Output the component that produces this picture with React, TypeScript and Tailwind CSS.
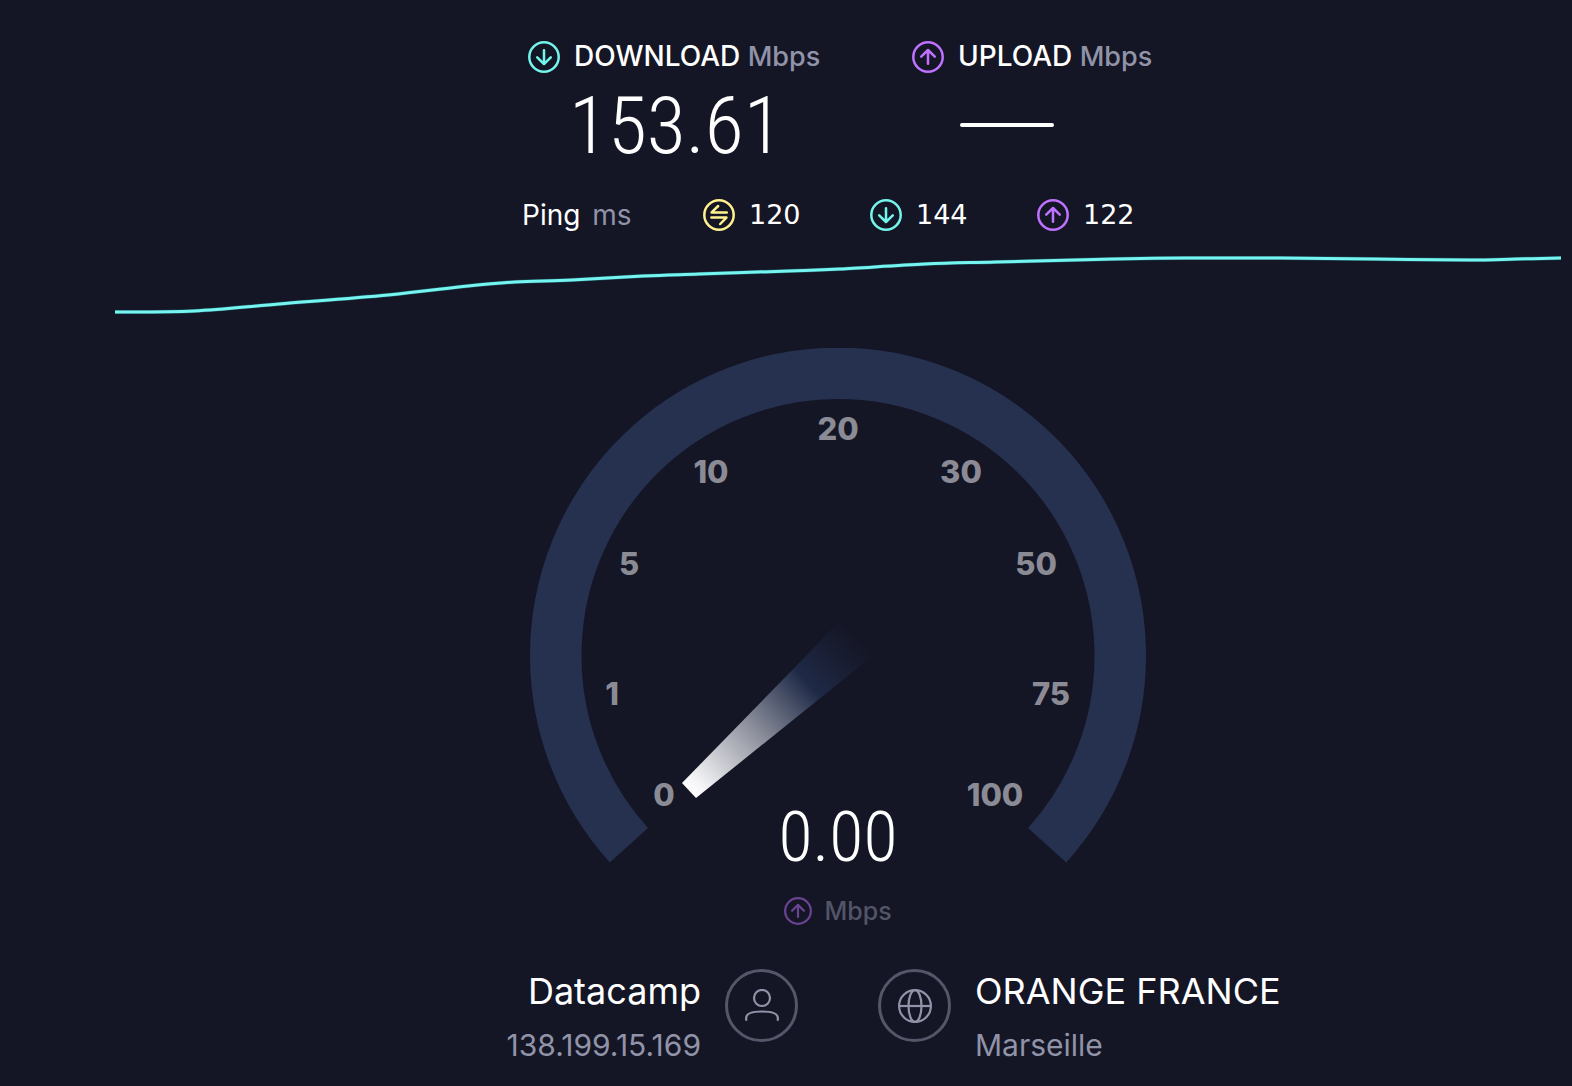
import type { ReactNode } from 'react';

const SAMPLES: [number, number][] = [
  [0, 62], [79, 61], [164, 54], [273, 45], [353, 36], [400, 32], [457, 30], [528, 26],
  [584, 24], [674, 21], [725, 19], [810, 14], [881, 12], [999, 9], [1070, 8],
  [1165, 8], [1259, 9], [1354, 10], [1401, 9], [1446, 8],
];

function smoothPath(points: [number, number][]) {
  let d = `M${points[0][0]} ${points[0][1]}`;
  for (let i = 0; i < points.length - 1; i++) {
    const p0 = points[Math.max(i - 1, 0)];
    const p1 = points[i];
    const p2 = points[i + 1];
    const p3 = points[Math.min(i + 2, points.length - 1)];
    d += ` C${p1[0] + (p2[0] - p0[0]) / 6} ${p1[1] + (p2[1] - p0[1]) / 6} ${p2[0] - (p3[0] - p1[0]) / 6} ${p2[1] - (p3[1] - p1[1]) / 6} ${p2[0]} ${p2[1]}`;
  }
  return d;
}

const CURVE = smoothPath(SAMPLES);

function RoundIcon({ className, children }: { className: string; children: ReactNode }) {
  return (
    <svg
      viewBox="0 0 32 32"
      fill="none"
      stroke="currentColor"
      strokeWidth="2.5"
      strokeLinecap="round"
      strokeLinejoin="round"
      className={`shrink-0 ${className}`}
      aria-hidden="true"
    >
      <circle cx="16" cy="16" r="14.7" />
      {children}
    </svg>
  );
}

function DownIcon() {
  return (
    <RoundIcon className="size-8 text-[#73f5ec]">
      <path d="M16 9.200v13.600M9.200 16.300l6.800 6.700 6.800-6.700" />
    </RoundIcon>
  );
}

function UpIcon({ className }: { className: string }) {
  return (
    <RoundIcon className={`text-[#bf71ff] ${className}`}>
      <path d="M16 22.800V9.200M9.200 15.700l6.800-6.700 6.800 6.700" />
    </RoundIcon>
  );
}

function PingIcon() {
  return (
    <RoundIcon className="size-8 text-[#fff18c]">
      <path d="M23.800 13.400H8.600l6.600-6.400M8.400 18.600h15l-6.200 6.400" />
    </RoundIcon>
  );
}

function PingValue({ icon, value }: { icon: ReactNode; value: string }) {
  return (
    <div className="flex w-[167px] shrink-0 items-center gap-[14px]">
      {icon}
      <span className="font-['DejaVu_Sans',sans-serif] text-[27px] leading-8">{value}</span>
    </div>
  );
}

const MARKS: [string, number, number][] = [
  ['0', 134, 447], ['1', 82, 346], ['5', 99, 216], ['10', 181, 124], ['20', 308, 81],
  ['30', 431, 124], ['50', 506, 216], ['75', 521, 346], ['100', 465, 447],
];

function Gauge() {
  return (
    <svg viewBox="0 0 616 577" className="col-start-1 row-start-1 w-full" role="img" aria-label="Speed gauge">
      <defs>
        <linearGradient id="needle" gradientUnits="userSpaceOnUse" x1="158" y1="443" x2="328" y2="288">
          <stop offset="0" stopColor="#ffffff" />
          <stop offset="0.06" stopColor="#f4f4f6" />
          <stop offset="0.38" stopColor="#90939f" />
          <stop offset="0.7" stopColor="#1f2a47" />
          <stop offset="1" stopColor="#1f2440" stopOpacity="0" />
        </linearGradient>
      </defs>
      <path d="M98.900 497.200A282.250 282.250 0 1 1 517.100 497.200" fill="none" stroke="#26304f" strokeWidth="51.5" />
      <path d="M152 435L308 275L345 306L166 450Z" fill="url(#needle)" />
      <g fill="#8b8b95" fontSize="31" fontWeight="800" textAnchor="middle">
        {MARKS.map(([label, x, y]) => (
          <text key={label} x={x} y={y + 11}>
            {label}
          </text>
        ))}
      </g>
    </svg>
  );
}

export default function App() {
  return (
    <main className="min-h-screen bg-[#141625] pt-[39px] pr-[11px] pb-6 pl-[115px] font-['Inter',sans-serif] text-white">
      <section className="mx-auto flex max-w-[632px] pl-[6px]">
        <div className="w-[384px] shrink-0">
          <h2 className="flex items-center gap-[14px] text-[28px] leading-[34px] font-medium">
            <DownIcon />
            <span className="whitespace-nowrap">
              DOWNLOAD <span className="text-[27px] text-[#9193a8]">Mbps</span>
            </span>
          </h2>
          <p className="pl-[41px] font-['Roboto_Condensed',sans-serif] text-[80px] leading-[104px] font-light">153.61</p>
        </div>
        <div>
          <h2 className="flex items-center gap-[14px] text-[28px] leading-[34px] font-medium">
            <UpIcon className="size-8" />
            <span className="whitespace-nowrap">
              UPLOAD <span className="text-[27px] text-[#9193a8]">Mbps</span>
            </span>
          </h2>
          <div className="mt-[49px] ml-12 h-1 w-[94px] rounded-sm bg-white" />
        </div>
      </section>

      <section className="mx-auto mt-[21px] flex max-w-[632px] items-center">
        <h3 className="w-[181px] shrink-0 text-[28px] leading-8">
          Ping <span className="ml-1 text-[#9193a8]">ms</span>
        </h3>
        <PingValue icon={<PingIcon />} value="120" />
        <PingValue icon={<DownIcon />} value="144" />
        <PingValue icon={<UpIcon className="size-8" />} value="122" />
      </section>

      <svg viewBox="0 0 1446 70" preserveAspectRatio="none" fill="none" className="mt-[19px] h-[70px] w-full" aria-hidden="true">
        <path d={CURVE} stroke="#1d5560" strokeWidth="4" vectorEffect="non-scaling-stroke" />
        <path d={CURVE} stroke="#75f4f0" strokeWidth="3" vectorEffect="non-scaling-stroke" />
      </svg>

      <section className="mx-auto mt-7 grid max-w-[616px]">
        <Gauge />
        <div className="col-start-1 row-start-1 flex flex-col items-center self-end">
          <p className="font-['Roboto_Condensed',sans-serif] text-[70px] leading-[72px] font-light">0.00</p>
          <p className="mt-6 flex items-center gap-3 text-[25px] leading-7 font-medium text-[#9193a8]">
            <UpIcon className="size-7 opacity-50" />
            <span className="opacity-50">Mbps</span>
          </p>
        </div>
      </section>

      <section className="mt-[35px] grid grid-cols-2 gap-20">
        <div className="flex justify-end gap-6">
          <div className="text-right">
            <p className="mt-2 text-[36px] leading-[46px]">Datacamp</p>
            <p className="mt-2 text-[30px] leading-[46px] text-[#9193a8]">138.199.15.169</p>
          </div>
          <span className="mt-[9px] flex size-[73px] items-center justify-center rounded-full border-[3px] border-[#55566a]">
            <svg viewBox="0 0 34 34" fill="none" stroke="#9193a8" strokeWidth="2.2" strokeLinecap="round" className="size-[34px]" aria-hidden="true">
              <circle cx="17" cy="9" r="8" />
              <path d="M1.200 31v-2c0-4.500 6-6.500 15.800-6.500s15.800 2 15.800 6.500v2" />
            </svg>
          </span>
        </div>
        <div className="flex gap-6">
          <span className="mt-[9px] flex size-[73px] shrink-0 items-center justify-center rounded-full border-[3px] border-[#55566a]">
            <svg viewBox="0 0 34 34" fill="none" stroke="#9193a8" strokeWidth="2.2" className="size-[34px]" aria-hidden="true">
              <circle cx="17" cy="17" r="15.900" />
              <ellipse cx="17" cy="17" rx="6.500" ry="15.900" />
              <path d="M1 17h32" />
            </svg>
          </span>
          <div>
            <p className="mt-2 text-[36px] leading-[46px] whitespace-nowrap">ORANGE FRANCE</p>
            <p className="mt-2 text-[30px] leading-[46px] text-[#9193a8]">Marseille</p>
          </div>
        </div>
      </section>
    </main>
  );
}
